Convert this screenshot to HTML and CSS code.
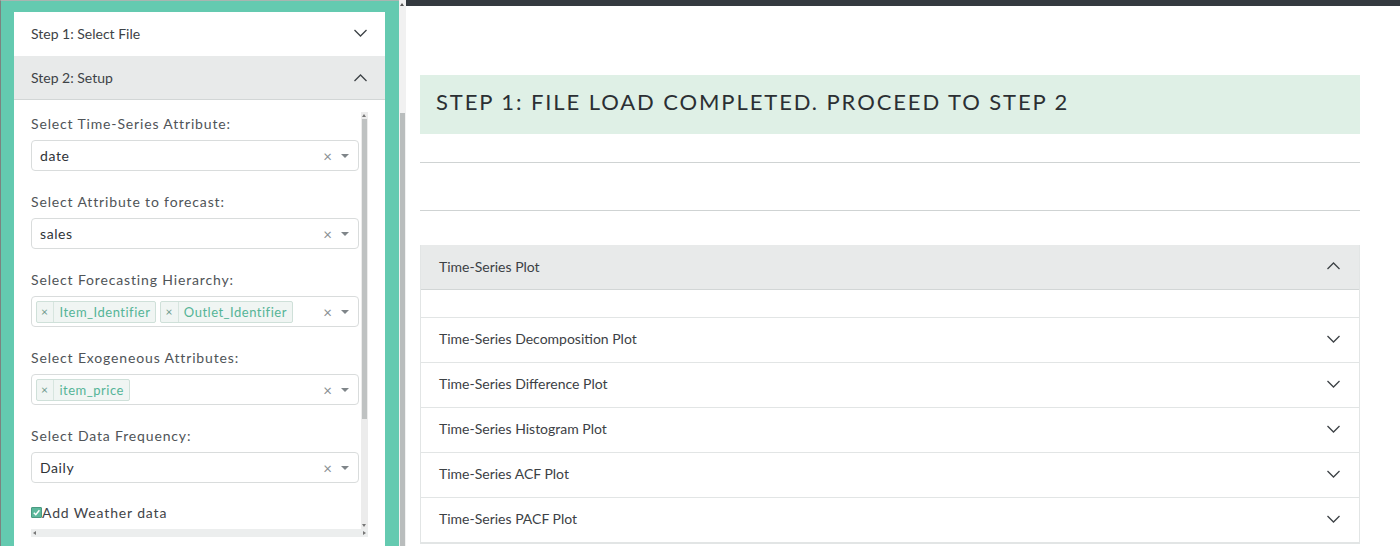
FILE: index.html
```html
<!DOCTYPE html>
<html>
<head>
<meta charset="utf-8">
<link rel="stylesheet" href="styles.css">
</head>
<body>
<div class="app">
  <aside class="sidebar">
    <div class="card">
      <div class="step-head">
        <span>Step 1: Select File</span>
        <svg class="chev" viewBox="0 0 14 8"><path d="M1 1 L7 7 L13 1"/></svg>
      </div>
      <div class="step-head active">
        <span>Step 2: Setup</span>
        <svg class="chev" viewBox="0 0 14 8"><path d="M1 7 L7 1 L13 7"/></svg>
      </div>
      <div class="step-body">
        <div class="scroller">
          <div class="scroll-row">
            <div class="form">
              <div class="group">
                <label class="lbl">Select Time-Series Attribute:</label>
                <div class="select"><span class="val">date</span><span class="clear">×</span><span class="caret"></span></div>
              </div>
              <div class="group">
                <label class="lbl">Select Attribute to forecast:</label>
                <div class="select"><span class="val">sales</span><span class="clear">×</span><span class="caret"></span></div>
              </div>
              <div class="group">
                <label class="lbl">Select Forecasting Hierarchy:</label>
                <div class="select multi">
                  <span class="tags"><span class="tag"><span class="tx">×</span><span class="tt">Item_Identifier</span></span><span class="tag"><span class="tx">×</span><span class="tt">Outlet_Identifier</span></span></span>
                  <span class="clear">×</span><span class="caret"></span>
                </div>
              </div>
              <div class="group">
                <label class="lbl">Select Exogeneous Attributes:</label>
                <div class="select multi">
                  <span class="tags"><span class="tag"><span class="tx">×</span><span class="tt">item_price</span></span></span>
                  <span class="clear">×</span><span class="caret"></span>
                </div>
              </div>
              <div class="group">
                <label class="lbl">Select Data Frequency:</label>
                <div class="select"><span class="val">Daily</span><span class="clear">×</span><span class="caret"></span></div>
              </div>
              <div class="check">
                <span class="box"><svg viewBox="0 0 10 10"><path d="M2 5.2 L4.2 7.5 L8.2 2.5"/></svg></span><span class="lbl">Add Weather data</span>
              </div>
            </div>
            <div class="vbar">
              <span class="arr up"></span>
              <span class="thumb"></span>
              <span class="track"></span>
              <span class="arr down"></span>
            </div>
          </div>
          <div class="hbar">
            <span class="harr left"></span>
            <span class="htrack"></span>
            <span class="harr right"></span>
          </div>
        </div>
      </div>
    </div>
  </aside>
  <div class="outer-bar">
    <span class="oarr"></span>
    <span class="otrack"></span>
    <span class="othumb"></span>
  </div>
  <main class="main">
    <div class="topbar"></div>
    <div class="content">
      <div class="banner">STEP 1: FILE LOAD COMPLETED. PROCEED TO STEP 2</div>
      <hr class="rule first">
      <hr class="rule">
      <div class="accordion">
        <div class="acc-head open"><span>Time-Series Plot</span><svg class="chev" viewBox="0 0 14 8"><path d="M1 7 L7 1 L13 7"/></svg></div>
        <div class="acc-body"></div>
        <div class="acc-head"><span>Time-Series Decomposition Plot</span><svg class="chev" viewBox="0 0 14 8"><path d="M1 1 L7 7 L13 1"/></svg></div>
        <div class="acc-head"><span>Time-Series Difference Plot</span><svg class="chev" viewBox="0 0 14 8"><path d="M1 1 L7 7 L13 1"/></svg></div>
        <div class="acc-head"><span>Time-Series Histogram Plot</span><svg class="chev" viewBox="0 0 14 8"><path d="M1 1 L7 7 L13 1"/></svg></div>
        <div class="acc-head"><span>Time-Series ACF Plot</span><svg class="chev" viewBox="0 0 14 8"><path d="M1 1 L7 7 L13 1"/></svg></div>
        <div class="acc-head"><span>Time-Series PACF Plot</span><svg class="chev" viewBox="0 0 14 8"><path d="M1 1 L7 7 L13 1"/></svg></div>
      </div>
    </div>
  </main>
</div>
</body>
</html>
```
FILE: styles.css
```css
* { box-sizing: border-box; }
html, body { margin: 0; padding: 0; }
body {
  font-family: Lato, "Noto Sans", sans-serif;
  color: #343a40;
  background: #fff;
  width: 1400px;
  height: 546px;
  overflow: hidden;
}
.app {
  display: flex;
  height: 546px;
}
.sidebar {
  width: 399px;
  flex: none;
  background: #64cab0;
  border-top: 1px solid #a9b5b1;
  border-left: 1px solid #7b8480;
  padding: 11px 14px 0 13px;
  display: flex;
}
.card {
  flex: 1;
  background: #fff;
  display: flex;
  flex-direction: column;
}
.step-head {
  height: 44px;
  flex: none;
  display: flex;
  align-items: center;
  justify-content: space-between;
  padding: 0 17px 2px 17px;
  font-size: 14px;
  color: #3d4246;
}
.step-head.active {
  background: #e8eaea;
  border-bottom: 1px solid #d2d6d6;
  padding-bottom: 0;
}
.chev {
  width: 15px;
  height: 8px;
  fill: none;
  stroke: #3d4246;
  stroke-width: 1.3;
}
.step-body {
  flex: 1;
  padding: 12px 17px 9px 17px;
  display: flex;
}
.scroller {
  flex: 1;
  display: flex;
  flex-direction: column;
}
.scroll-row {
  flex: 1;
  display: flex;
  min-height: 0;
}
.form {
  flex: 1;
  padding-right: 2px;
  overflow: hidden;
}
.group {
  margin-bottom: 20px;
}
.lbl {
  display: block;
  height: 20px;
  line-height: 21px;
  margin-top: 1px;
  font-size: 14px;
  letter-spacing: 0.85px;
  color: #4f5458;
}
.select {
  margin-top: 7px;
  height: 31px;
  border: 1px solid #d9dcdc;
  border-radius: 4px;
  display: flex;
  align-items: center;
  padding: 0 9px 0 8px;
}
.select.multi { padding-left: 4px; }
.val {
  flex: 1;
  font-size: 14px;
  letter-spacing: 0.6px;
  color: #2f3337;
}
.tags {
  flex: 1;
  display: flex;
  gap: 4px;
}
.tag {
  height: 22px;
  display: flex;
  align-items: center;
  background: #f0f5f3;
  border: 1px solid #cfe0d9;
  border-radius: 2px;
  font-size: 13px;
  letter-spacing: 0.5px;
}
.tx {
  padding: 0 5px 0 4px;
  color: #6d9a8c;
  font-size: 12px;
  border-right: 1px solid #d7e5df;
  height: 100%;
  display: flex;
  align-items: center;
}
.tt {
  padding: 0 5px 0 5px;
  color: #55b497;
}
.clear {
  color: #8a8f92;
  font-size: 15px;
  margin-right: 9px;
}
.caret {
  width: 0;
  height: 0;
  border-left: 4px solid transparent;
  border-right: 4px solid transparent;
  border-top: 4px solid #7f8589;
}
.check {
  display: flex;
  align-items: center;
  height: 20px;
  margin-top: -1px;
}
.check .lbl { margin-top: 0; color: #3f4448; }
.box {
  width: 11px;
  height: 11px;
  background: #5cb89c;
  border: 1px solid #4b9a82;
  border-radius: 1px;
  display: flex;
}
.box svg {
  width: 9px;
  height: 9px;
  fill: none;
  stroke: #fff;
  stroke-width: 1.6;
}
.vbar {
  width: 7px;
  flex: none;
  display: flex;
  flex-direction: column;
  background: #ececec;
}
.arr {
  height: 7px;
  flex: none;
  position: relative;
}
.arr::after {
  content: "";
  position: absolute;
  left: 1px;
  border-left: 2.5px solid transparent;
  border-right: 2.5px solid transparent;
}
.arr.up::after { top: 2px; border-bottom: 3px solid #777; }
.arr.down::after { top: 2px; border-top: 3px solid #777; }
.thumb {
  height: 300px;
  flex: none;
  background: #bfc2c2;
  margin: 0 1px;
}
.track { flex: 1; }
.hbar {
  height: 8px;
  flex: none;
  display: flex;
  background: #eceeee;
}
.harr {
  width: 8px;
  position: relative;
}
.harr::after {
  content: "";
  position: absolute;
  top: 1.5px;
  border-top: 2.5px solid transparent;
  border-bottom: 2.5px solid transparent;
}
.harr.left::after { left: 2px; border-right: 3px solid #777; }
.harr.right::after { left: 3px; border-left: 3px solid #777; }
.htrack { flex: 1; }
.outer-bar {
  width: 7px;
  flex: none;
  display: flex;
  flex-direction: column;
  background: #f1f1f1;
}
.oarr {
  height: 10px;
  flex: none;
  position: relative;
}
.oarr::after {
  content: "";
  position: absolute;
  left: 1px;
  top: 3px;
  border-left: 2.5px solid transparent;
  border-right: 2.5px solid transparent;
  border-bottom: 3px solid #555;
}
.otrack { height: 103px; flex: none; }
.othumb { flex: 1; background: #b9bdbd; margin: 0 1px; }
.main {
  flex: 1;
  display: flex;
  flex-direction: column;
}
.topbar {
  height: 6px;
  flex: none;
  background: #343a40;
}
.content {
  padding: 69px 40px 0 14px;
}
.banner {
  height: 59px;
  background: #dff0e6;
  display: flex;
  align-items: center;
  padding: 0 16px 6px 16px;
  font-size: 22px;
  letter-spacing: 1.9px;
  color: #2b2f33;
}
.rule {
  border: 0;
  border-top: 1px solid #cfd3d3;
  margin: 0;
  margin-top: 47px;
}
.rule.first { margin-top: 28px; }
.accordion {
  margin-top: 34px;
  border: 1px solid #e2e5e5;
  border-top: 0;
  border-bottom-width: 2px;
}
.acc-head {
  height: 45px;
  display: flex;
  align-items: center;
  justify-content: space-between;
  padding: 0 18px 3px 18px;
  font-size: 14px;
  color: #3c4145;
  border-top: 1px solid #e2e5e5;
}
.acc-head.open {
  background: #e8eaea;
  border-top: 0;
  border-bottom: 1px solid #d2d6d6;
  padding-bottom: 2px;
}
.acc-body { height: 27px; }
```
